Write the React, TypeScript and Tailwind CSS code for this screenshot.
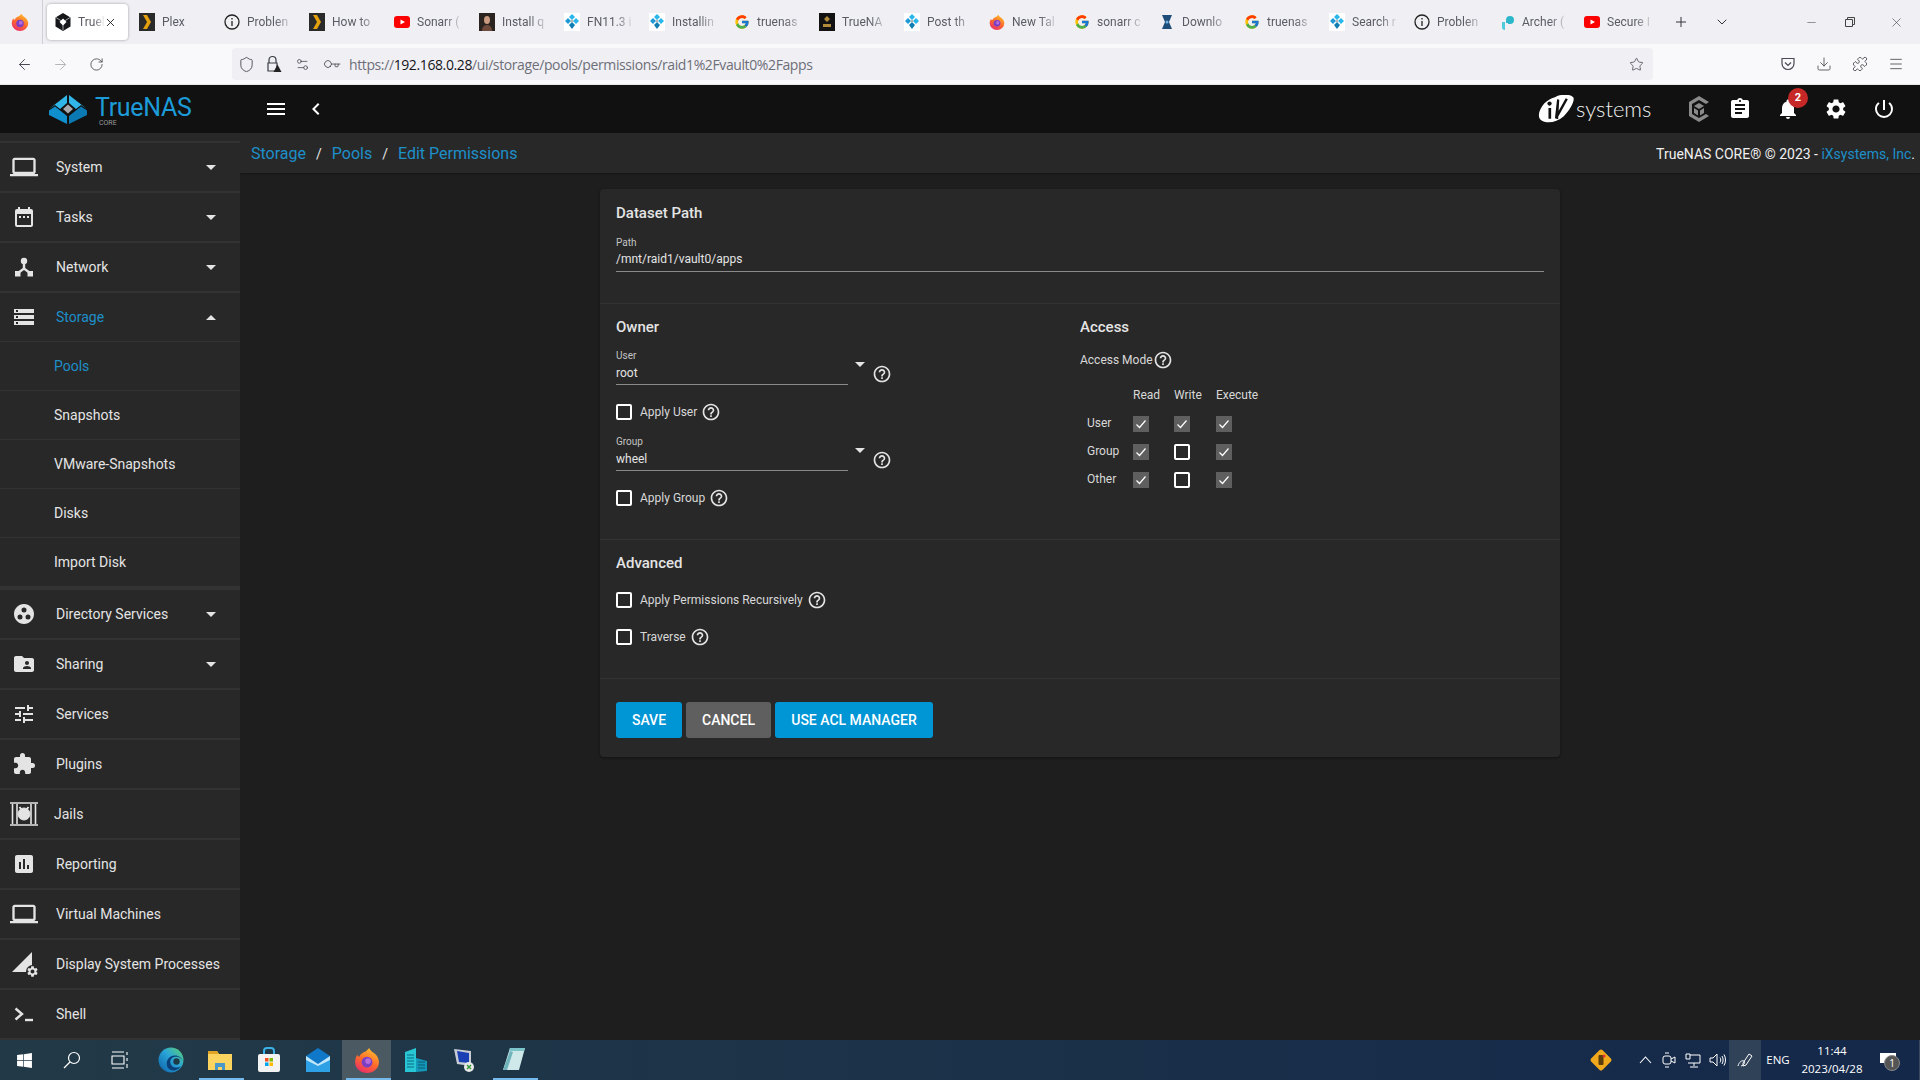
import React from 'react'
import {
  ArrowLeft,
  ArrowRight,
  ChevronDown,
  Download,
  Key,
  Menu,
  Minus,
  Plus,
  Puzzle,
  RotateCw,
  Settings2,
  Shield,
  Star,
  X
} from 'lucide-react'
import {
  MdAssessment,
  MdAssignment,
  MdChevronLeft,
  MdDateRange,
  MdExtension,
  MdFolderShared,
  MdGroupWork,
  MdHelpOutline,
  MdLaptop,
  MdMenu,
  MdNotifications,
  MdPowerSettingsNew,
  MdSettings,
  MdStorage,
  MdTune
} from 'react-icons/md'
import { FcGoogle } from 'react-icons/fc'
import { FaWindows } from 'react-icons/fa'

const Firefox = ({ size = 16 }: { size?: number }) => (
  <svg width={size} height={size} viewBox="0 0 24 24">
    <defs>
      <linearGradient id="ffx" x1="0.7" y1="0" x2="0.2" y2="1">
        <stop offset="0" stopColor="#ffbd2e" />
        <stop offset="0.5" stopColor="#ff6a2a" />
        <stop offset="1" stopColor="#e8296f" />
      </linearGradient>
    </defs>
    <path d="M14 1c1 3 4 4 6 6 2 2 3 5 3 7a11 10 0 0 1-22 0c0-3 1-5 2-7 0 1 1 2 2 2 1-3 4-4 6-5 1-1 2-2 3-3z" fill="url(#ffx)" />
    <circle cx="12" cy="14" r="5" fill="#7b3fc4" />
    <circle cx="13" cy="13" r="2.6" fill="#b56bd8" />
  </svg>
)

const TrueHex = () => (
  <svg width="16" height="18" viewBox="0 0 16 18">
    <path d="M8 0l7.500 4.500v9L8 18 .5 13.500v-9z" fill="#15171a" />
    <path d="M8 5.500l3.500 3.500L8 12.500 4.500 9z" fill="#fff" />
    <path d="M1 4.500L8 9l7-4.500M8 9v8" stroke="#fff" strokeWidth="0.6" fill="none" />
  </svg>
)

const TrueBlue = () => (
  <span className="w-[18px] h-[18px] bg-white flex items-center justify-center">
    <svg width="16" height="16" viewBox="0 0 16 16">
      <path d="M8 0l3 3-3 3-3-3z" fill="#29b6ea" />
      <path d="M4 4l3 3-3 3-3-3z" fill="#1d9ad6" />
      <path d="M12 4l3 3-3 3-3-3z" fill="#29b6ea" />
      <path d="M8 8l3 3-3 4-3-4z" fill="#0f7eb5" />
      <path d="M8 5.500l1.500 1.500L8 8.500 6.500 7z" fill="#aaa" />
    </svg>
  </span>
)

const Plex = () => (
  <svg width="16" height="18" viewBox="0 0 16 18">
    <rect width="16" height="18" fill="#2a2a2a" />
    <path d="M4 2h4l4 7-4 7H4l4-7z" fill="#e5a00d" />
  </svg>
)

const Info = () => (
  <svg width="16" height="16" viewBox="0 0 16 16" fill="none" stroke="#222" strokeWidth="1.3">
    <circle cx="8" cy="8" r="7" />
    <path d="M8 7v5M8 4v1.600" />
  </svg>
)

const Youtube = () => (
  <svg width="16" height="16" viewBox="0 0 16 16">
    <rect y="2" width="16" height="12" rx="3" fill="#f00" />
    <path d="M6.500 5.500L11 8l-4.500 2.500z" fill="#fff" />
  </svg>
)

const Favicon = ({ name }: { name: string }) => {
  if (name === 'plex') return <Plex />
  if (name === 'info') return <Info />
  if (name === 'yt') return <Youtube />
  if (name === 'blue') return <TrueBlue />
  if (name === 'google') return <FcGoogle size={16} />
  if (name === 'ff') return <Firefox size={16} />
  if (name === 'portrait')
    return (
      <svg width="16" height="18" viewBox="0 0 16 18">
        <rect width="16" height="18" fill="#2b2320" />
        <ellipse cx="8" cy="7" rx="3" ry="4" fill="#c99a80" />
        <path d="M3 18c0-5 3-6 5-6s5 1 5 6z" fill="#6d4a3c" />
      </svg>
    )
  if (name === 'dark')
    return (
      <svg width="16" height="18" viewBox="0 0 16 18">
        <rect width="16" height="18" fill="#121212" />
        <path d="M8 3l3 3-3 3-3-3zM4 11h8v3H4z" fill="#b08b3a" />
      </svg>
    )
  if (name === 'radarr')
    return (
      <svg width="16" height="18" viewBox="0 0 16 18">
        <path d="M3 2h10l-3 7 3 7H3l3-7z" fill="#1f4e79" />
        <circle cx="8" cy="9" r="1.500" fill="#6fb1e0" />
      </svg>
    )
  return (
    <svg width="16" height="18" viewBox="0 0 16 18">
      <path d="M7 10V7a4 4 0 1 1 4 4H9v-1z" fill="#2cb6c9" />
      <path d="M3 9h3v8a3 3 0 0 1-3-3z" fill="#4ecbdc" />
    </svg>
  )
}

const tabs = [
  ['plex', 'Plex'],
  ['info', 'Problen'],
  ['plex', 'How to'],
  ['yt', 'Sonarr ('],
  ['portrait', 'Install q'],
  ['blue', 'FN11.3 i'],
  ['blue', 'Installin'],
  ['google', 'truenas'],
  ['dark', 'TrueNA'],
  ['blue', 'Post th'],
  ['ff', 'New Tal'],
  ['google', 'sonarr c'],
  ['radarr', 'Downlo'],
  ['google', 'truenas'],
  ['blue', 'Search r'],
  ['info', 'Problen'],
  ['archer', 'Archer ('],
  ['yt', 'Secure I']
]

const TabBar = () => (
  <div className="h-[44px] flex items-center bg-[#f0f0f4] shrink-0">
    <div className="w-[43px] h-full flex items-center justify-center border-r border-[#cfcfd8] pr-[3px]">
      <Firefox size={18} />
    </div>
    <div className="w-[81px] h-[36px] ml-[4px] mr-[3px] bg-white rounded-[4px] shadow-[0_0_3px_rgba(0,0,0,0.35)] flex items-center pl-[8px]">
      <TrueHex />
      <span className="ml-[7px] w-[27px] whitespace-nowrap text-[12px] font-['Roboto',sans-serif] text-[#5b5b66] [mask-image:linear-gradient(to_right,black_60%,transparent)]">
        Truel
      </span>
      <X size={13} strokeWidth={1.6} className="-ml-[1px] text-[#15141a]" />
    </div>
    {tabs.map(([icon, title], i) => (
      <div key={i} className="w-[85px] flex items-center pl-[8px] shrink-0">
        <span className="w-[16px] h-[18px] flex items-center justify-center shrink-0">
          <Favicon name={icon} />
        </span>
        <span className="ml-[7px] w-[50px] whitespace-nowrap text-[12px] font-['Roboto',sans-serif] text-[#5b5b66] [mask-image:linear-gradient(to_right,black_55%,transparent_95%)]">
          {title}
        </span>
      </div>
    ))}
    <Plus size={16} strokeWidth={1.5} className="ml-[12px] text-[#33333a]" />
    <ChevronDown size={16} strokeWidth={1.5} className="ml-[25px] text-[#33333a]" />
    <Minus size={13} strokeWidth={1} className="ml-[75px] text-[#444]" />
    <svg width="12" height="12" viewBox="0 0 12 12" fill="none" stroke="#444" className="ml-[26px]">
      <path d="M1.500 3.500h7v7h-7zM3.500 3.500v-2h7v7h-2" />
    </svg>
    <X size={15} strokeWidth={1} className="ml-[33px] text-[#444]" />
  </div>
)

const LockWarn = () => (
  <svg width="16" height="18" viewBox="0 0 16 18" fill="none" stroke="#3a3a44" strokeWidth="1.200">
    <path d="M3 8V5a3.500 3.500 0 0 1 7 0v3" />
    <path d="M2 8h9v8H2z" />
    <path d="M11.500 9.500l4 7.500h-8z" fill="#222" stroke="none" />
  </svg>
)

const ToolBar = () => (
  <div className="h-[41px] flex items-center bg-[#f9f9fb] border-b border-[#e8e8ec] pl-[6px] shrink-0 text-[#4a4a54]">
    <span className="w-[36px] flex justify-center"><ArrowLeft size={17} strokeWidth={1.4} /></span>
    <span className="w-[36px] flex justify-center text-[#b4b4b9]"><ArrowRight size={17} strokeWidth={1.4} /></span>
    <span className="w-[36px] flex justify-center"><RotateCw size={15} strokeWidth={1.4} /></span>
    <div className="ml-[118px] w-[1421px] h-[32px] bg-[#f0f0f4] rounded-[4px] flex items-center">
      <span className="w-[28px] flex justify-center"><Shield size={17} strokeWidth={1.3} /></span>
      <span className="w-[28px] flex justify-center"><LockWarn /></span>
      <span className="w-[29px] flex justify-center"><Settings2 size={15} strokeWidth={1.3} /></span>
      <span className="w-[29px] flex justify-center"><Key size={15} strokeWidth={1.3} className="rotate-45" /></span>
      <span className="ml-[3px] text-[14px] text-[#6e6e78] font-['Open_Sans',sans-serif] tracking-[-0.39px]">
        https://<span className="text-[#15141a]">192.168.0.28</span>/ui/storage/pools/permissions/raid1%2Fvault0%2Fapps
      </span>
      <Star size={15} strokeWidth={1.3} className="ml-auto mr-[9px]" />
    </div>
    <span className="ml-[117px] w-[36px] flex justify-center">
      <svg width="16" height="16" viewBox="0 0 16 16" fill="none" stroke="#4a4a54" strokeWidth="1.200">
        <path d="M2 2.500h12v5a6 6 0 0 1-12 0z" />
        <path d="M5 6.500l3 3 3-3" />
      </svg>
    </span>
    <span className="w-[36px] flex justify-center"><Download size={16} strokeWidth={1.3} /></span>
    <span className="w-[36px] flex justify-center"><Puzzle size={16} strokeWidth={1.3} /></span>
    <span className="w-[36px] flex justify-center"><Menu size={16} strokeWidth={1.3} /></span>
  </div>
)

const TrueLogo = () => (
  <svg width="38" height="29" viewBox="0 0 38 29">
    <path d="M18 0v8l-7 6-5-4-6 4z" fill="#31b6e7" />
    <path d="M20 0l18 14-6-4-5 4-7-6z" fill="#31b6e7" />
    <path d="M19 9.500l5 4.500-5 4.500-5-4.500z" fill="#a7a9ac" />
    <path d="M0 15.500l6-4 4.500 3.600 7.500 6V29L0 20z" fill="#0f8fcd" />
    <path d="M38 15.500l-6-4-4.500 3.600-7.500 6V29l18-9z" fill="#0b7ab3" />
  </svg>
)

const TopBar = () => (
  <div className="h-[48px] bg-[#111111] flex items-center shrink-0 text-white">
    <div className="w-[240px] h-full flex items-center pl-[49px]">
      <TrueLogo />
      <div className="ml-[8px] relative -mt-[2px]">
        <span className="block leading-[22px] text-[25px] text-[#1c9bd8] font-['Roboto',sans-serif] tracking-[-0.3px]">TrueNAS</span>
        <span className="absolute left-[4px] top-[23px] leading-none text-[7px] text-[#9a9a9a]">CORE</span>
      </div>
    </div>
    <span className="ml-[24px] w-[24px] flex justify-center"><MdMenu size={24} /></span>
    <span className="ml-[16px] w-[24px] flex justify-center"><MdChevronLeft size={24} /></span>
    <div className="ml-auto flex items-center pr-[12px]">
      <svg width="40" height="28" viewBox="0 0 36 26">
        <path d="M17 2c5-3 14-3 17 0 2 3-3 12-9 18-6 5-14 7-20 4C0 21 2 14 7 8c3-3 6-5 10-6z" fill="#fff" />
        <circle cx="12" cy="8" r="2" fill="#111" />
        <path d="M11 12h2.500v10H11zM19 4l2 .500-1 18-3-1zM27 3l2 1L19 22l-2-1z" fill="#111" />
      </svg>
      <span className="text-[22px] font-light font-['Lato',sans-serif] text-[#eeeeee] leading-none w-[78px]">systems</span>
      <span className="ml-[21px] w-[48px] flex justify-center">
        <svg width="24" height="26" viewBox="0 0 24 26" fill="#8a8a8a">
          <path d="M12 0l10 6-3 2-7-4-7 4v10l7 4 7-4 3 2-10 6L2 20V6z" />
          <path d="M12 7l5 3-5 3-5-3zM7 12l4 2.500v5L7 17zM17 12l-4 2.500v5l4-2.500z" />
        </svg>
      </span>
      <span className="-ml-[7px] w-[48px] flex justify-center"><MdAssignment size={24} /></span>
      <span className="w-[48px] flex justify-center relative">
        <MdNotifications size={24} />
        <span className="absolute left-[24px] -top-[9px] w-[20px] h-[20px] rounded-full bg-[#c62828] text-[11px] font-bold flex items-center justify-center">2</span>
      </span>
      <span className="w-[48px] flex justify-center"><MdSettings size={24} /></span>
      <span className="w-[48px] flex justify-center"><MdPowerSettingsNew size={24} /></span>
    </div>
  </div>
)

const NetworkIcon = () => (
  <svg width="22" height="22" viewBox="0 0 22 22" fill="#e4e4e4">
    <circle cx="11" cy="5" r="3.200" />
    <path d="M9.800 7h2.400v5l5.500 4-1.400 2-5.300-4-5.300 4-1.400-2 5.500-4z" />
    <rect x="2" y="15" width="5.500" height="5.500" />
    <rect x="14.500" y="15" width="5.500" height="5.500" />
  </svg>
)

const JailIcon = () => (
  <svg width="28" height="24" viewBox="0 0 28 24" fill="none" stroke="#e4e4e4">
    <path d="M0 1h28M0 23h28" strokeWidth="1.600" />
    <path d="M2.500 2v20M7 2v20M21 2v20M25.500 2v20" strokeWidth="1.600" />
    <circle cx="14" cy="12" r="6" fill="#e4e4e4" />
    <path d="M9.500 5l2 2.500M18.500 5l-2 2.500" strokeWidth="2" />
  </svg>
)

const ProcessIcon = () => (
  <span className="relative w-[26px] h-[24px] block">
    <svg width="24" height="22" viewBox="0 0 24 22" fill="#e4e4e4">
      <path d="M21 0v20H1z" />
    </svg>
    <span className="absolute right-[-2px] bottom-[-2px] bg-[#282828] rounded-full">
      <MdSettings size={13} color="#e4e4e4" />
    </span>
  </span>
)

const ShellIcon = () => (
  <svg width="20" height="16" viewBox="0 0 20 16" fill="none" stroke="#e4e4e4" strokeWidth="2.400">
    <path d="M1.500 2.500l6.500 5.500-6.500 5.500" />
    <path d="M11 14h8" />
  </svg>
)

const icon = (I: React.ComponentType<{ size?: number; color?: string }>, size = 24) => (
  <I size={size} color="#e4e4e4" />
)

const Caret = ({ up = false }: { up?: boolean }) => (
  <span
    className={
      up
        ? 'w-0 h-0 border-x-[5px] border-x-transparent border-b-[5px] border-b-[#e4e4e4]'
        : 'w-0 h-0 border-x-[5px] border-x-transparent border-t-[5px] border-t-[#e4e4e4]'
    }
  />
)

const NavRow = ({
  label,
  ic,
  caret,
  active,
  last,
  textLeft = 'pl-[8px]'
}: {
  label: string
  ic: React.ReactNode
  caret?: boolean
  active?: boolean
  last?: boolean
  textLeft?: string
}) => (
  <div
    className={
      last
        ? 'h-[49px] flex items-center border-b border-[#333333]'
        : 'h-[50px] flex items-center border-b-2 border-[#333333]'
    }
  >
    <span className="w-[48px] flex justify-center shrink-0">{ic}</span>
    <span className={'flex-1 text-[14px] whitespace-nowrap ' + textLeft + (active ? ' text-[#1e8fc9]' : ' text-[#e4e4e4]')}>
      {label}
    </span>
    {caret && (
      <span className="mr-[24px] flex">
        <Caret up={active} />
      </span>
    )}
  </div>
)

const SubRow = ({ label, active, last }: { label: string; active?: boolean; last?: boolean }) => (
  <div
    className={
      (last ? 'h-[52px] border-b-4' : 'h-[49px] border-b') +
      ' border-[#333333] pl-[54px] flex items-center text-[14px] ' +
      (active ? 'text-[#1e8fc9]' : 'text-[#e4e4e4]')
    }
  >
    {label}
  </div>
)

const SideBar = () => (
  <div className="w-[240px] h-full bg-[#282828] shrink-0 overflow-hidden">
    <div className="h-[10px] border-b-2 border-[#333333]" />
    <NavRow label="System" ic={icon(MdLaptop, 28)} caret />
    <NavRow label="Tasks" ic={icon(MdDateRange)} caret />
    <NavRow label="Network" ic={<NetworkIcon />} caret />
    <NavRow label="Storage" ic={icon(MdStorage)} caret active last />
    <SubRow label="Pools" active />
    <SubRow label="Snapshots" />
    <SubRow label="VMware-Snapshots" />
    <SubRow label="Disks" />
    <SubRow label="Import Disk" last />
    <NavRow label="Directory Services" ic={icon(MdGroupWork)} caret />
    <NavRow label="Sharing" ic={icon(MdFolderShared)} caret />
    <NavRow label="Services" ic={icon(MdTune)} />
    <NavRow label="Plugins" ic={icon(MdExtension)} />
    <NavRow label="Jails" ic={<JailIcon />} textLeft="pl-[6px]" />
    <NavRow label="Reporting" ic={icon(MdAssessment)} />
    <NavRow label="Virtual Machines" ic={icon(MdLaptop, 28)} />
    <NavRow label="Display System Processes" ic={<ProcessIcon />} />
    <NavRow label="Shell" ic={<ShellIcon />} />
  </div>
)

const Help = () => <MdHelpOutline size={20} color="#e4e4e4" className="shrink-0" />

const Check = ({ on = false }: { on?: boolean }) =>
  on ? (
    <span className="w-[16px] h-[16px] bg-[#5f5f5f] flex items-center justify-center">
      <svg width="14" height="14" viewBox="0 0 14 14" fill="none" stroke="#fff" strokeWidth="1.200">
        <path d="M2.500 7.500l3 3 6-7" />
      </svg>
    </span>
  ) : (
    <span className="w-[16px] h-[16px] border-2 border-white rounded-[2px] block shrink-0" />
  )

const CheckRow = ({ label, className }: { label: string; className: string }) => (
  <div className={'flex items-center h-[20px] ' + className}>
    <Check />
    <span className="ml-[8px] mr-[4px] text-[12px] text-[#d8d8d8]">{label}</span>
    <Help />
  </div>
)

const SelectField = ({ label, value, className }: { label: string; value: string; className: string }) => (
  <div className={'flex ' + className}>
    <div className="w-[232px] h-[36px] border-b border-[#8a8a8a]">
      <div className="text-[10px] leading-[12px] mt-[1px] text-[#c4c4c4]">{label}</div>
      <div className="text-[12px] leading-[14px] mt-[4px] text-[#e4e4e4]">{value}</div>
    </div>
    <span className="ml-[7px] mt-[13px] flex h-[5px]">
      <Caret />
    </span>
    <span className="ml-[7px] mt-[15px]">
      <Help />
    </span>
  </div>
)

const Title = ({ children }: { children: React.ReactNode }) => (
  <div className="text-[15px] leading-[16px] font-medium text-[#e4e4e4]">{children}</div>
)

const permissions = [
  ['User', true, true, true],
  ['Group', true, false, true],
  ['Other', true, false, true]
] as const

const PermissionCard = () => (
  <div className="mx-auto mt-[16px] w-[960px] h-[568px] bg-[#282828] rounded-[4px] shadow-[0_1px_3px_rgba(0,0,0,0.4)]">
    <div className="h-[115px] px-[16px] pt-[16px] border-b border-[#333333]">
      <Title>Dataset Path</Title>
      <div className="mt-[16px] h-[35px] border-b border-[#8a8a8a]">
        <div className="text-[10px] leading-[12px] text-[#c4c4c4]">Path</div>
        <div className="text-[12px] leading-[14px] mt-[3px] text-[#e4e4e4]">/mnt/raid1/vault0/apps</div>
      </div>
    </div>
    <div className="h-[236px] px-[16px] pt-[15px] border-b border-[#333333] grid grid-cols-2">
      <div>
        <Title>Owner</Title>
        <SelectField label="User" value="root" className="mt-[14px]" />
        <CheckRow label="Apply User" className="mt-[17px]" />
        <SelectField label="Group" value="wheel" className="mt-[13px]" />
        <CheckRow label="Apply Group" className="mt-[17px]" />
      </div>
      <div>
        <Title>Access</Title>
        <div className="mt-[15px] flex items-center h-[20px] text-[12px] text-[#d8d8d8]">
          Access Mode
          <Help />
        </div>
        <div className="mt-[18px] grid grid-cols-[53px_41px_42px_60px] text-[12px] text-[#d8d8d8]">
          <span />
          <span className="h-[14px] leading-[14px]">Read</span>
          <span className="h-[14px] leading-[14px]">Write</span>
          <span className="h-[14px] leading-[14px]">Execute</span>
        </div>
        <div className="mt-[14px] flex flex-col gap-[12px]">
          {permissions.map(([name, r, w, x]) => (
            <div key={name} className="grid grid-cols-[53px_41px_42px_60px] items-center h-[16px] text-[12px] text-[#d8d8d8]">
              <span className="pl-[7px] -mt-[2px]">{name}</span>
              <Check on={r} />
              <Check on={w} />
              <Check on={x} />
            </div>
          ))}
        </div>
      </div>
    </div>
    <div className="h-[139px] px-[16px] pt-[15px] border-b border-[#333333]">
      <Title>Advanced</Title>
      <CheckRow label="Apply Permissions Recursively" className="mt-[19px]" />
      <CheckRow label="Traverse" className="mt-[17px]" />
    </div>
    <div className="flex gap-[4px] px-[16px] pt-[23px] text-[14px] font-medium text-white">
      <button className="w-[66px] h-[36px] rounded-[3px] bg-[#0095d5]">SAVE</button>
      <button className="w-[85px] h-[36px] rounded-[3px] bg-[#5f5f5f]">CANCEL</button>
      <button className="w-[158px] h-[36px] rounded-[3px] bg-[#0095d5]">USE ACL MANAGER</button>
    </div>
  </div>
)

const Main = () => (
  <div className="flex-1 h-full bg-[#1e1e1e] overflow-hidden">
    <div className="h-[40px] bg-[#282828] flex items-center pl-[11px] pr-[5px] pt-[2px] shadow-[0_1px_2px_rgba(0,0,0,0.3)]">
      <span className="text-[16px] text-[#1e8fc9]">Storage</span>
      <span className="mx-[10px] text-[14px] text-[#e4e4e4]">/</span>
      <span className="text-[16px] text-[#1e8fc9]">Pools</span>
      <span className="mx-[10px] text-[14px] text-[#e4e4e4]">/</span>
      <span className="text-[16px] text-[#1e8fc9]">Edit Permissions</span>
      <span className="ml-auto text-[14px] text-[#f0f0f0]">
        TrueNAS CORE® © 2023 - <span className="text-[#1e8fc9]">iXsystems, Inc</span>.
      </span>
    </div>
    <PermissionCard />
  </div>
)

const Edge = () => (
  <svg width="26" height="26" viewBox="0 0 26 26">
    <defs>
      <linearGradient id="edg" x1="0" y1="1" x2="1" y2="0">
        <stop offset="0" stopColor="#0c5fa8" />
        <stop offset="0.55" stopColor="#2aa5d8" />
        <stop offset="1" stopColor="#5fd36a" />
      </linearGradient>
    </defs>
    <circle cx="13" cy="13" r="12.500" fill="url(#edg)" />
    <path d="M25 15c-1-5-6-6-9-5-4 1-5 6-2 9 2 2 6 2 9 0-3 5-10 6-13 2-2-3-2-8 2-11 5-3 12-1 13 5z" fill="#0a3f7a" />
    <circle cx="18.500" cy="14.500" r="3.200" fill="#1e3a46" />
  </svg>
)

const Folder = () => (
  <svg width="26" height="24" viewBox="0 0 26 24">
    <path d="M1 3h9l2 3h13v16H1z" fill="#fbd35f" />
    <path d="M1 3h9l2 3H1z" fill="#e0a526" />
    <path d="M8 22v-7h10v7h-3v-3h-4v3z" fill="#4a97c9" />
  </svg>
)

const Store = () => (
  <svg width="24" height="26" viewBox="0 0 24 26">
    <path d="M7 7V4a3 3 0 0 1 3-3h4a3 3 0 0 1 3 3v3" fill="none" stroke="#3bb1e6" strokeWidth="2" />
    <rect x="1" y="7" width="22" height="18" rx="2" fill="#f3f3f3" />
    <rect x="8" y="11" width="3.500" height="3.500" fill="#f25022" />
    <rect x="12.500" y="11" width="3.500" height="3.500" fill="#7fba00" />
    <rect x="8" y="15.500" width="3.500" height="3.500" fill="#00a4ef" />
    <rect x="12.500" y="15.500" width="3.500" height="3.500" fill="#ffb900" />
  </svg>
)

const Mail = () => (
  <svg width="24" height="24" viewBox="0 0 24 24">
    <path d="M0 8l12-8 12 8v16H0z" fill="#0f78c8" />
    <path d="M0 8l12 8 12-8v6l-12 6-12-6z" fill="#bfe6fb" />
    <path d="M0 24V12l12 6 12-6v12z" fill="#2ea0e6" />
  </svg>
)

const Building = () => (
  <svg width="24" height="26" viewBox="0 0 24 26">
    <path d="M1 5l11-4v24H1z" fill="#28c6d4" />
    <path d="M12 11l11 3v10l-11 1z" fill="#1496b8" />
    <path d="M3 8h7M3 11h7M3 14h7M3 17h7M3 20h7" stroke="#0d6b82" strokeWidth="1" />
    <path d="M14 15h7M14 18h7M14 21h7" stroke="#0b5c73" strokeWidth="1" />
  </svg>
)

const Monitor = () => (
  <svg width="24" height="26" viewBox="0 0 24 26">
    <path d="M1 2l17 2v15L4 17z" fill="#c7ccd4" />
    <path d="M4 4l12 2v10L6 15z" fill="#1a3fb5" />
    <circle cx="16" cy="20" r="5" fill="#e8e8e8" />
    <path d="M14 22l4-4M14 18l4 4" stroke="#3a9a3a" strokeWidth="1.500" />
  </svg>
)

const Notepad = () => (
  <svg width="24" height="26" viewBox="0 0 24 26">
    <path d="M8 1h15l-6 22H1z" fill="#cfe9ea" />
    <path d="M8 1h15l-1 3H7z" fill="#7cc4c9" />
    <path d="M1 23L8 4l3 1-6 18z" fill="#6fb4ba" />
  </svg>
)

const Diamond = () => (
  <svg width="24" height="24" viewBox="0 0 24 24">
    <rect x="4" y="4" width="16" height="16" rx="2" transform="rotate(45 12 12)" fill="#f0a81c" />
    <rect x="9.500" y="7" width="5" height="10" rx="1" fill="#5a3d0a" />
    <circle cx="15" cy="8" r="1.500" fill="#e03030" />
  </svg>
)

const TaskApp = ({ children, open, active }: { children: React.ReactNode; open?: boolean; active?: boolean }) => (
  <span className={'relative w-[49px] h-full flex items-center justify-center ' + (active ? 'bg-[#4b5a62]' : '')}>
    {children}
    {open && <span className="absolute bottom-0 left-[4px] right-0 h-[2px] bg-[#76b9ed]" />}
  </span>
)

const TaskBar = () => (
  <div className="h-[40px] bg-gradient-to-r from-[#223a47] to-[#14284a] flex items-center shrink-0 text-white font-['Open_Sans',sans-serif]">
    <span className="w-[48px] flex justify-center"><FaWindows size={17} /></span>
    <span className="w-[48px] flex justify-center">
      <svg width="18" height="18" viewBox="0 0 18 18" fill="none" stroke="#fff" strokeWidth="1.200">
        <circle cx="11" cy="7" r="5.500" />
        <path d="M7 11l-6 6" />
      </svg>
    </span>
    <span className="w-[48px] flex justify-center">
      <svg width="18" height="18" viewBox="0 0 18 18" fill="none" stroke="#fff" strokeWidth="1.100">
        <path d="M1 1h12M1 17h12M1 5h12v8H1zM16 1v3M16 7v3M16 13v4" />
      </svg>
    </span>
    <div className="ml-[2px] flex h-full items-center">
      <TaskApp><Edge /></TaskApp>
      <TaskApp open><Folder /></TaskApp>
      <TaskApp><Store /></TaskApp>
      <TaskApp><Mail /></TaskApp>
      <TaskApp open active><Firefox size={26} /></TaskApp>
      <TaskApp><Building /></TaskApp>
      <TaskApp><Monitor /></TaskApp>
      <TaskApp open><Notepad /></TaskApp>
    </div>
    <div className="ml-auto flex h-full items-center">
      <span className="w-[40px] mr-[12px] flex justify-center"><Diamond /></span>
      <span className="w-[24px] flex justify-center">
        <svg width="13" height="8" viewBox="0 0 13 8" fill="none" stroke="#fff" strokeWidth="1.100"><path d="M1 7l5.500-6L12 7" /></svg>
      </span>
      <span className="w-[24px] flex justify-center">
        <svg width="14" height="16" viewBox="0 0 14 16" fill="none" stroke="#fff" strokeWidth="1"><rect x="1" y="4" width="8" height="8" rx="2" /><path d="M9 7l4-2v6l-4-2M3 1h4M3 15h4" /></svg>
      </span>
      <span className="w-[24px] flex justify-center">
        <svg width="16" height="15" viewBox="0 0 16 15" fill="none" stroke="#fff" strokeWidth="1"><path d="M5 2h10v8H3M1 1h4v5H1zM9 10v3M5 14h8" /></svg>
      </span>
      <span className="w-[24px] flex justify-center">
        <svg width="17" height="14" viewBox="0 0 17 14" fill="none" stroke="#fff" strokeWidth="1"><path d="M1 5h3l4-4v12L4 9H1zM11 4.500c1 1.500 1 3.500 0 5M13 3c1.500 2.500 1.500 5.500 0 8M15 1.500c2 3 2 8 0 11" /></svg>
      </span>
      <span className="w-[32px] h-full bg-[#2f4258] flex items-center justify-center">
        <svg width="17" height="16" viewBox="0 0 17 16" fill="none" stroke="#fff" strokeWidth="1"><path d="M1 14c1-4 4-6 6-5s-1 5-3 5M6 11l6-9 3 2-6 9-3 1z" /></svg>
      </span>
      <span className="w-[34px] text-center text-[11.500px]">ENG</span>
      <span className="w-[74px] text-center text-[11.500px] leading-[18px]">
        <span className="block">11:44</span>
        <span className="block whitespace-nowrap">2023/04/28</span>
      </span>
      <span className="w-[38px] flex justify-center relative">
        <svg width="16" height="14" viewBox="0 0 16 14" fill="#fff"><path d="M0 0h16v10H8l-3 3v-3H0z" /></svg>
        <span className="absolute left-[15px] top-[2px] w-[16px] h-[16px] rounded-full bg-[#555] border border-[#888] text-[10px] flex items-center justify-center">1</span>
      </span>
      <span className="w-[13px] h-full border-r border-[#3a4a5e]" />
    </div>
  </div>
)

const App = () => {
  return (
    <div className="w-screen h-screen flex flex-col overflow-hidden font-['Roboto',sans-serif] bg-[#1e1e1e]">
      <TabBar />
      <ToolBar />
      <TopBar />
      <div className="flex-1 min-h-0 flex">
        <SideBar />
        <Main />
      </div>
      <TaskBar />
    </div>
  )
}

export default App
